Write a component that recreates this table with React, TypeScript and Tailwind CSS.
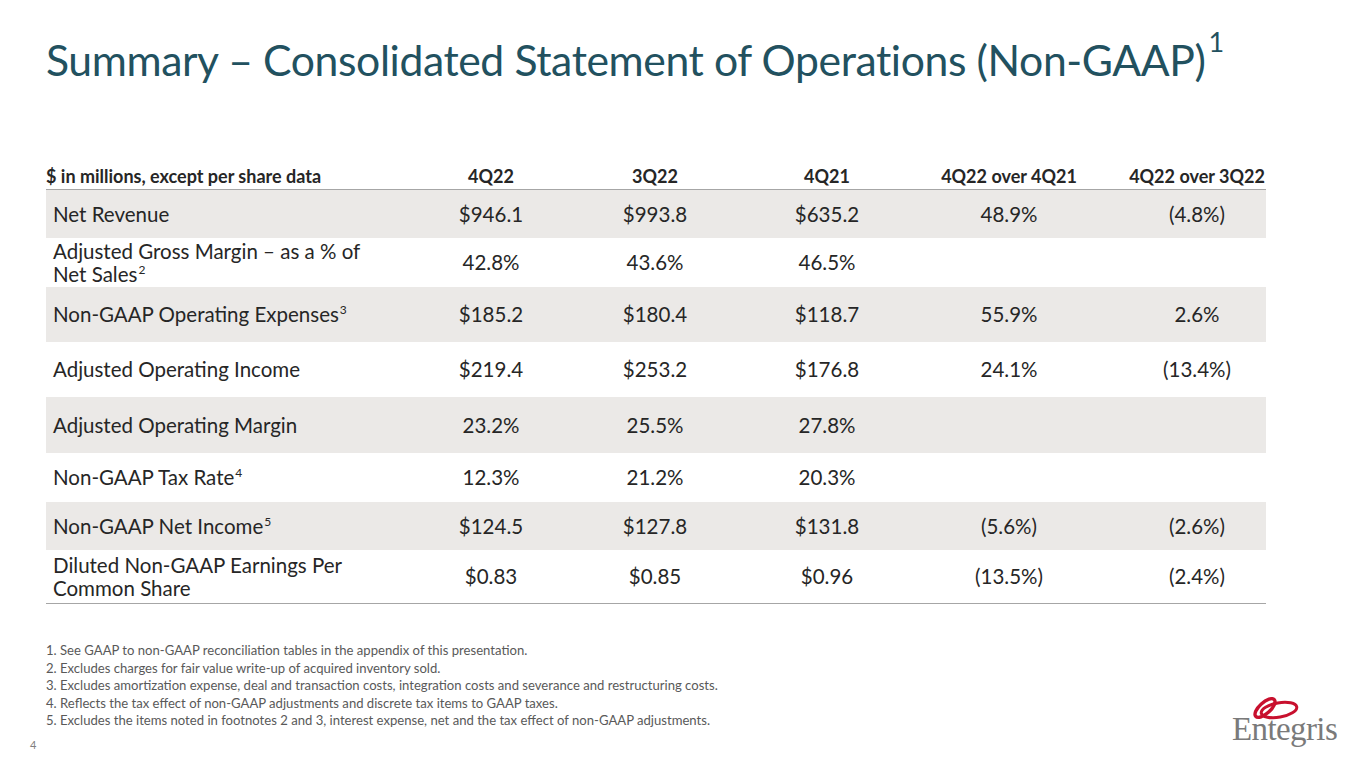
import React from "react";

const Sup = ({ n }: { n: string }) => <sup className="text-[12px] relative -top-[8px] ml-[1px]">{n}</sup>;

const rows: { label: React.ReactNode; vals: string[]; bg: boolean; h: string }[] = [
  { label: "Net Revenue", vals: ["$946.1", "$993.8", "$635.2", "48.9%", "(4.8%)"], bg: true, h: "h-[48px]" },
  {
    label: (
      <>
        Adjusted Gross Margin – as a % of
        <br />
        Net Sales<Sup n="2" />
      </>
    ),
    vals: ["42.8%", "43.6%", "46.5%", "", ""],
    bg: false,
    h: "h-[49px]",
  },
  {
    label: (
      <>
        Non-GAAP Operating Expenses<Sup n="3" />
      </>
    ),
    vals: ["$185.2", "$180.4", "$118.7", "55.9%", "2.6%"],
    bg: true,
    h: "h-[55px]",
  },
  { label: "Adjusted Operating Income", vals: ["$219.4", "$253.2", "$176.8", "24.1%", "(13.4%)"], bg: false, h: "h-[55px]" },
  { label: "Adjusted Operating Margin", vals: ["23.2%", "25.5%", "27.8%", "", ""], bg: true, h: "h-[56px]" },
  {
    label: (
      <>
        Non-GAAP Tax Rate<Sup n="4" />
      </>
    ),
    vals: ["12.3%", "21.2%", "20.3%", "", ""],
    bg: false,
    h: "h-[49px]",
  },
  {
    label: (
      <>
        Non-GAAP Net Income<Sup n="5" />
      </>
    ),
    vals: ["$124.5", "$127.8", "$131.8", "(5.6%)", "(2.6%)"],
    bg: true,
    h: "h-[48px]",
  },
  {
    label: (
      <>
        Diluted Non-GAAP Earnings Per
        <br />
        Common Share
      </>
    ),
    vals: ["$0.83", "$0.85", "$0.96", "(13.5%)", "(2.4%)"],
    bg: false,
    h: "h-[54px]",
  },
];

const grid = "grid grid-cols-[390px_110px_218px_126px_238px_138px]";

function Logo() {
  return (
    <div className="flex flex-col items-start w-[110px]">
      <svg width="52" height="24" viewBox="0 0 52 24" className="ml-[18px]">
        <ellipse cx="15" cy="11" rx="12.5" ry="5.5" transform="rotate(-42 15 11)" fill="none" stroke="#c8102e" strokeWidth="3.4" />
        <ellipse cx="29" cy="13" rx="18" ry="7.2" transform="rotate(-10 29 13)" fill="none" stroke="#c8102e" strokeWidth="3" />
      </svg>
      <div
        className="-mt-[8px] text-[33px] leading-none text-[#7a7a7a] tracking-[-0.6px]"
        style={{ fontFamily: '"Liberation Serif", serif' }}
      >
        Entegris
      </div>
    </div>
  );
}

const headers = ["4Q22", "3Q22", "4Q21", "4Q22 over 4Q21", "4Q22 over 3Q22"];

export default function App() {
  return (
    <div className="w-[1365px] h-[768px] bg-white flex flex-col overflow-hidden" style={{ fontFamily: 'Lato, "Open Sans", sans-serif' }}>
      <h1 className="pl-[46px] pt-[30px] text-[42.7px] leading-[60px] text-[#22515f] tracking-[-0.4px] whitespace-nowrap">
        Summary – Consolidated Statement of Operations (Non-GAAP)
        <sup className="text-[27px] relative -top-[24px] ml-[3px]">1</sup>
      </h1>

      <div className="ml-[46px] mt-[70px] w-[1220px] text-[#262626]">
        <div className={`${grid} h-[30px] items-end pb-[1px] border-b border-[#a6a6a6] text-[18px] leading-[24px] font-bold whitespace-nowrap`}>
          <div>$ in millions, except per share data</div>
          {headers.map((h) => (
            <div key={h} className="flex justify-center">
              {h}
            </div>
          ))}
        </div>
        {rows.map((r, i) => (
          <div
            key={i}
            className={`${grid} ${r.h} items-center text-[20.5px] leading-[23px] ${r.bg ? "bg-[#ebe9e7]" : ""} ${
              i === rows.length - 1 ? "border-b border-[#a6a6a6]" : ""
            }`}
          >
            <div className="pl-[7px]">{r.label}</div>
            {r.vals.map((v, j) => (
              <div key={j} className="text-center">
                {v}
              </div>
            ))}
          </div>
        ))}
      </div>

      <div className="flex justify-between items-start mt-[38px] pr-[23px]">
        <div className="flex flex-col">
          <div className="pl-[46px] text-[13.1px] leading-[17.6px] text-[#595959]">
            <div>1. See GAAP to non-GAAP reconciliation tables in the appendix of this presentation.</div>
            <div>2. Excludes charges for fair value write-up of acquired inventory sold.</div>
            <div>3. Excludes amortization expense, deal and transaction costs, integration costs and severance and restructuring costs.</div>
            <div>4. Reflects the tax effect of non-GAAP adjustments and discrete tax items to GAAP taxes.</div>
            <div>5. Excludes the items noted in footnotes 2 and 3, interest expense, net and the tax effect of non-GAAP adjustments.</div>
          </div>
          <div className="pl-[30px] mt-[7px] text-[11px] leading-[16px] text-[#7f7f7f]">4</div>
        </div>
        <div className="mt-[55px]">
          <Logo />
        </div>
      </div>
    </div>
  );
}
